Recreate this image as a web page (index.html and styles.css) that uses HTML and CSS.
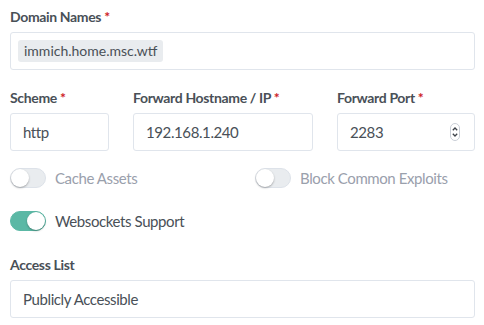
FILE: index.html
```html
<!DOCTYPE html>
<html lang="en">
<head>
  <meta charset="UTF-8">
  <meta name="viewport" content="width=device-width, initial-scale=1.0">
  <title>Proxy Host - Details</title>
  <link rel="stylesheet" href="styles.css">
</head>
<body>
  <form class="host-form">
    <div class="form-group">
      <label class="form-label">Domain Names <span class="required">*</span></label>
      <div class="form-control chips">
        <span class="chip">immich.home.msc.wtf</span>
      </div>
    </div>

    <div class="form-row">
      <div class="form-group">
        <label class="form-label">Scheme <span class="required">*</span></label>
        <div class="form-control">http</div>
      </div>
      <div class="form-group">
        <label class="form-label">Forward Hostname / IP <span class="required">*</span></label>
        <div class="form-control">192.168.1.240</div>
      </div>
      <div class="form-group">
        <label class="form-label">Forward Port <span class="required">*</span></label>
        <div class="form-control number">
          <span>2283</span>
          <svg class="spinner" width="10" height="18" viewBox="0 0 10 18">
            <rect x="0.5" y="0.5" width="9" height="17" rx="4.5" fill="#fff" stroke="#c9ced6"/>
            <path d="M2.8 7.2 L5 5 L7.2 7.2" fill="none" stroke="#3d4249" stroke-width="1.3"/>
            <path d="M2.8 10.8 L5 13 L7.2 10.8" fill="none" stroke="#3d4249" stroke-width="1.3"/>
          </svg>
        </div>
      </div>
    </div>

    <div class="switches">
      <label class="custom-switch">
        <span class="switch-indicator"></span>
        <span class="switch-description">Cache Assets</span>
      </label>
      <label class="custom-switch">
        <span class="switch-indicator"></span>
        <span class="switch-description">Block Common Exploits</span>
      </label>
      <label class="custom-switch checked">
        <span class="switch-indicator"></span>
        <span class="switch-description">Websockets Support</span>
      </label>
    </div>

    <div class="form-group">
      <label class="form-label">Access List</label>
      <div class="form-control">Publicly Accessible</div>
    </div>
  </form>
</body>
</html>
```

FILE: styles.css
```css
* {
  box-sizing: border-box;
  margin: 0;
  padding: 0;
}
body {
  background-color: #fff;
  padding: 6px 9px 0 10px;
  font-family: Lato, 'Liberation Sans', sans-serif;
  font-size: 15px;
  letter-spacing: -0.4px;
  color: #495057;
}
.form-group {
  margin-bottom: 17px;
}
.form-label {
  display: block;
  font-size: 14px;
  line-height: 21px;
  font-weight: 700;
  letter-spacing: -0.35px;
  margin-bottom: 5px;
}
.required {
  color: #cd201f;
}
.form-control {
  display: flex;
  align-items: center;
  height: 38px;
  padding: 0 12px;
  border: 1px solid #e0e5ec;
  border-radius: 3px;
  line-height: 24px;
}
.chips {
  padding: 0 7px;
}
.chip {
  background-color: #e9ecef;
  border-radius: 3px;
  padding: 0 6px;
  height: 22px;
  line-height: 22px;
  font-size: 14px;
  letter-spacing: 0;
}
.form-row {
  display: grid;
  grid-template-columns: 99px 180px 1fr;
  gap: 24px;
}
.number {
  justify-content: space-between;
  padding-right: 14px;
}
.spinner {
  display: block;
}
.switches {
  display: grid;
  grid-template-columns: 1fr 1fr;
  column-gap: 25px;
  row-gap: 23px;
  margin-bottom: 23px;
}
.custom-switch {
  display: flex;
  align-items: center;
  height: 20px;
}
.switch-indicator {
  position: relative;
  width: 36px;
  height: 20px;
  border-radius: 50px;
  background-color: #e9ecef;
  border: 1px solid #dde2e9;
  flex-shrink: 0;
}
.switch-indicator::before {
  content: '';
  position: absolute;
  top: 0;
  left: 0;
  width: 18px;
  height: 18px;
  border-radius: 50%;
  background-color: #fff;
  box-shadow: 0 1px 2px 0 rgba(0, 0, 0, 0.3);
}
.checked .switch-indicator {
  background-color: #5bb8a5;
  border-color: #5bb8a5;
}
.checked .switch-indicator::before {
  left: 16px;
}
.switch-description {
  margin-left: 9px;
  color: #9aa0ac;
  line-height: 20px;
}
.checked .switch-description {
  color: #495057;
}
```
